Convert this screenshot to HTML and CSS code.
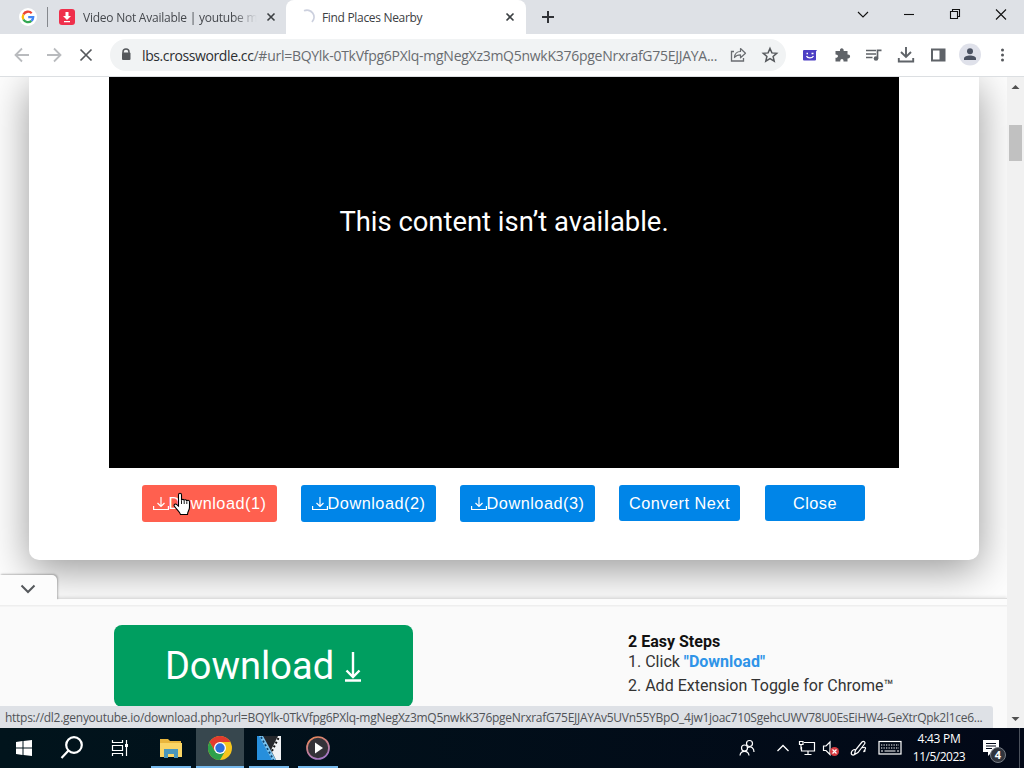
FILE: index.html
```
<!DOCTYPE html>
<html lang="en">
<head>
    <meta charset="UTF-8">
    <meta name="viewport" content="width=device-width, initial-scale=1.0">
    <title>Find Places Nearby</title>
    <link rel="stylesheet" href="styles.css">
</head>
<body>
    <!-- Tab strip -->
    <div class="tab-strip">
        <div class="pinned-tab">
            <svg width="18" height="18" viewBox="0 0 18 18">
                <circle cx="9" cy="9" r="9" fill="#fff"/>
                <g fill="none" stroke-width="2.3">
                    <path d="M12.7 5.2A5.2 5.2 0 0 0 4.4 6.5" stroke="#ea4335"/>
                    <path d="M4.4 6.5A5.2 5.2 0 0 0 4.4 11.5" stroke="#fbbc05"/>
                    <path d="M4.4 11.5A5.2 5.2 0 0 0 12.4 12.9" stroke="#34a853"/>
                    <path d="M12.4 12.9A5.2 5.2 0 0 0 14.2 9.1H9.2" stroke="#4285f4"/>
                </g>
            </svg>
        </div>
        <div class="tab">
            <svg width="16" height="16" viewBox="0 0 16 16">
                <rect width="16" height="16" rx="3" fill="#ef2f4b"/>
                <path d="M6.5 3h3v4H12l-4 4-4-4h2.500zM5 12h6v1.300H5z" fill="#fff"/>
            </svg>
            <span class="tab-title faded">Video Not Available | youtube m</span>
            <svg class="tab-close" width="10" height="10" viewBox="0 0 10 10"><path d="M1.500 1.500l7 7M8.500 1.500l-7 7"/></svg>
        </div>
        <div class="tab active">
            <svg width="16" height="16" viewBox="0 0 16 16"><path d="M5 1.800A7 7 0 0 1 13 13" fill="none" stroke="#ccd0de" stroke-width="1.800"/></svg>
            <span class="tab-title">Find Places Nearby</span>
            <svg class="tab-close" width="10" height="10" viewBox="0 0 10 10"><path d="M1.500 1.500l7 7M8.500 1.500l-7 7"/></svg>
        </div>
        <svg class="new-tab" width="12" height="12" viewBox="0 0 12 12"><path d="M6 0v12M0 6h12" stroke="#303236" stroke-width="2"/></svg>
        <div class="window-buttons">
            <svg width="46" height="30" viewBox="0 0 46 30"><path d="M18 12l5 5 5-5"/></svg>
            <svg width="46" height="30" viewBox="0 0 46 30"><path d="M18 14.500h10"/></svg>
            <svg width="46" height="30" viewBox="0 0 46 30"><path d="M18.500 11.500h7v7h-7zM20.500 11.500v-2h7v7h-2"/></svg>
            <svg width="46" height="30" viewBox="0 0 46 30"><path d="M18 9.500l10 10M28 9.500l-10 10"/></svg>
        </div>
    </div>

    <!-- Toolbar -->
    <div class="toolbar">
        <svg class="cell" viewBox="0 0 32 32"><path d="M23 16H9.500M16 9.500L9.500 16l6.500 6.500" fill="none" stroke="#b9bbbe" stroke-width="1.800"/></svg>
        <svg class="cell" viewBox="0 0 32 32"><path d="M9 16h13.500M16 9.500l6.500 6.500-6.500 6.500" fill="none" stroke="#b9bbbe" stroke-width="1.800"/></svg>
        <svg class="cell" viewBox="0 0 32 32"><path d="M10.500 10.500l11 11M21.500 10.500l-11 11" fill="none" stroke="#55585c" stroke-width="1.700"/></svg>
        <div class="omnibox">
            <svg class="cell" viewBox="0 0 32 32">
                <path d="M13 14v-1a3 3 0 0 1 6 0v1" fill="none" stroke="#55585c" stroke-width="1.500"/>
                <rect x="12" y="13.500" width="8.500" height="7.500" rx="1" fill="#55585c"/>
            </svg>
            <span class="url"><b>lbs.crosswordle.cc</b>/#url=BQYlk-0TkVfpg6PXlq-mgNegXz3mQ5nwkK376pgeNrxrafG75EJJAYA...</span>
            <svg class="cell" viewBox="0 0 32 32">
                <path d="M12 12.500H9.500v9.500h12v-3" fill="none" stroke="#696c70" stroke-width="1.300"/>
                <path d="M12.500 18.500c.3-4 2.500-6 6-6v-3l5 4.700-5 4.600v-3c-2.700 0-4.500.7-6 2.700z" fill="none" stroke="#696c70" stroke-width="1.200" stroke-linejoin="round"/>
            </svg>
            <svg class="cell" viewBox="0 0 32 32"><path d="M16 9.500l1.900 4.400 4.800.4-3.600 3.200 1.100 4.700-4.200-2.500-4.200 2.500 1.100-4.700-3.600-3.200 4.800-.4z" fill="none" stroke="#55585c" stroke-width="1.500"/></svg>
        </div>
        <svg class="cell" viewBox="0 0 32 32">
            <path d="M10 11h13l-1 1.500v8a1 1 0 0 1-1 1H10a1 1 0 0 1-1-1V12a1 1 0 0 1 1-1z" fill="#4d3fc4"/>
            <path d="M12.500 14.500h1.500M17.500 14.500h2M12.500 17c1 2.500 5.500 2.500 7 0" fill="none" stroke="#fff" stroke-width="1.300"/>
        </svg>
        <svg class="cell" viewBox="0 0 32 32"><path d="M10 12h4c-.7-3.800 4.200-3.800 3.700 0h3.800v3.600c3.500-.5 3.500 4.300 0 3.800v3h-4c.4-3.200-3.400-3.200-3.200 0H9.500v-3.700c3.300.3 3.300-3.600 0-3.300V12z" fill="#5f6368"/></svg>
        <svg class="cell" viewBox="0 0 32 32">
            <path d="M8 11.500h10M8 15h10M8 18.500h6.500" stroke="#5f6368" stroke-width="1.500"/>
            <path d="M19.500 19.500V11.300H23.500" fill="none" stroke="#5f6368" stroke-width="1.700"/>
            <circle cx="18" cy="19.500" r="2.300" fill="#5f6368"/>
        </svg>
        <svg class="cell" viewBox="0 0 32 32"><path d="M16 8v9.500M11 13l5 5 5-5M8.800 19v3.500h14.400V19" fill="none" stroke="#5f6368" stroke-width="1.900"/></svg>
        <svg class="cell" viewBox="0 0 32 32"><path d="M10 10.500h12.500v11H10z" fill="none" stroke="#5f6368" stroke-width="2"/><path d="M17.500 10.500h5v11h-5z" fill="#5f6368"/></svg>
        <svg class="cell" viewBox="0 0 32 32">
            <circle cx="16" cy="15.500" r="11" fill="#dfe1ea"/>
            <circle cx="16" cy="12.300" r="3" fill="#4b5262"/>
            <path d="M10 21v-1.500c0-4 12-4 12 0V21z" fill="#4b5262"/>
        </svg>
        <svg class="cell" viewBox="0 0 32 32" fill="#55585c"><circle cx="16.500" cy="11" r="1.500"/><circle cx="16.500" cy="16" r="1.500"/><circle cx="16.500" cy="21" r="1.500"/></svg>
    </div>

    <!-- Web page -->
    <div class="viewport">
        <div class="page">
            <div class="backdrop">
                <div class="modal">
                    <div class="video">This content isn’t available.</div>
                    <div class="modal-buttons">
                        <a class="btn btn-hover"><svg class="dl-icon" viewBox="0 0 16 16"><path d="M8 1v9.500M4.500 7L8 10.500 11.500 7M.600 10v3.500h14.800V10"/></svg>Download(1)</a>
                        <a class="btn"><svg class="dl-icon" viewBox="0 0 16 16"><path d="M8 1v9.500M4.500 7L8 10.500 11.500 7M.600 10v3.500h14.800V10"/></svg>Download(2)</a>
                        <a class="btn"><svg class="dl-icon" viewBox="0 0 16 16"><path d="M8 1v9.500M4.500 7L8 10.500 11.500 7M.600 10v3.500h14.800V10"/></svg>Download(3)</a>
                        <a class="btn btn-convert">Convert Next</a>
                        <a class="btn btn-close">Close</a>
                    </div>
                </div>
            </div>
            <div class="ad">
                <div class="ad-toggle">
                    <svg width="16" height="10" viewBox="0 0 16 10"><path d="M1.500 1.500L8 8l6.500-6.500" fill="none" stroke="#55585c" stroke-width="2"/></svg>
                </div>
                <a class="ad-download">
                    <span>Download</span>
                    <svg width="18" height="32" viewBox="0 0 18 32"><path d="M9 2v25M2.500 20.500L9 27l6.500-6.500M1 30.500h16" fill="none" stroke="#fff" stroke-width="2.400"/></svg>
                </a>
                <div class="ad-steps">
                    <h3>2 Easy Steps</h3>
                    <p class="step-one">1. Click <b>"Download"</b></p>
                    <p class="step-two">2. Add Extension Toggle for Chrome™</p>
                </div>
            </div>
            <div class="status-bubble"><span>https://dl2.genyoutube.io/download.php?url=BQYlk-0TkVfpg6PXlq-mgNegXz3mQ5nwkK376pgeNrxrafG75EJJAYAv5UVn55YBpO_4jw1joac710SgehcUWV78U0EsEiHW4-GeXtrQpk2l1ce6...</span></div>
        </div>
        <div class="scrollbar">
            <svg width="9" height="5" viewBox="0 0 9 5"><path d="M.500 5L4.500 1l4 4z" fill="#505050"/></svg>
            <div class="thumb"></div>
            <svg class="arrow-down" width="9" height="5" viewBox="0 0 9 5"><path d="M.500 0l4 4 4-4z" fill="#505050"/></svg>
        </div>
    </div>

    <!-- Taskbar -->
    <div class="taskbar">
        <svg class="task" viewBox="0 0 48 40"><path d="M16 14l6.500-1v6.500H16zM23.500 12.900L32 12v7.500h-8.500zM16 20.500h6.500V27L16 26zM23.500 20.500H32V28l-8.500-1z" fill="#fff"/></svg>
        <svg class="task" viewBox="0 0 48 40"><g fill="none" stroke="#fff" stroke-width="2.200"><circle cx="26" cy="17" r="7.800"/><path d="M20.500 22.500L13.500 30"/></g></svg>
        <svg class="task" viewBox="0 0 48 40"><path d="M16.500 12v2.500h10V12M16.500 28v-2.500h10V28M16.500 17.500h10v5h-10zM30.500 12v16" fill="none" stroke="#fff" stroke-width="1.200"/><path d="M29 16h3v3h-3z" fill="#fff"/></svg>
        <div class="apps">
            <div class="app">
                <svg width="24" height="24" viewBox="0 0 24 24"><path d="M1 3h8l2 2h11v16H1z" fill="#e9b63d"/><path d="M1 7h22v14H1z" fill="#fad566"/><path d="M5 22v-9h14v9h-4v-4H9v4z" fill="#4a97bd"/></svg>
            </div>
            <div class="app current">
                <svg width="24" height="24" viewBox="0 0 24 24">
                    <circle cx="12" cy="12" r="12" fill="#f6c51d"/>
                    <path d="M1.600 6A12 12 0 0 1 22.400 6H12L6.800 15z" fill="#e23b2e"/>
                    <path d="M1.600 6A12 12 0 0 0 12 24l5.200-9L6.800 15z" fill="#2ea04b"/>
                    <circle cx="12" cy="12" r="6" fill="#fff"/>
                    <circle cx="12" cy="12" r="4.700" fill="#2d6fdc"/>
                </svg>
            </div>
            <div class="app">
                <svg width="24" height="24" viewBox="0 0 24 24">
                    <path d="M0 0h24v24H0z" fill="#25272b"/>
                    <path d="M0 0h3l13 24H0z" fill="#278fdc"/>
                    <path d="M24 0h-3l-7 14 5 10h5z" fill="#f0f2f4"/>
                    <path d="M2 0h4l13 24h-4z" fill="#7cc4ef"/>
                    <path d="M4 1l12.500 23" stroke="#0b416f" stroke-width="1.800" stroke-dasharray="2 2.200"/>
                    <path d="M21.500 2L14.500 16" stroke="#111" stroke-width="2" stroke-dasharray="2 2.200"/>
                </svg>
            </div>
            <div class="app">
                <svg width="24" height="24" viewBox="0 0 24 24">
                    <defs><linearGradient id="ring" x1="0" y1="0" x2=".4" y2="1"><stop offset="0" stop-color="#f08a52"/><stop offset="1" stop-color="#a678c2"/></linearGradient></defs>
                    <circle cx="12" cy="12" r="11" fill="#343238" stroke="url(#ring)" stroke-width="1.700"/>
                    <path d="M9 6.500l8 5.500-8 5.500z" fill="#fff"/>
                </svg>
            </div>
        </div>
        <div class="tray">
            <svg width="42" height="40" viewBox="0 0 42 40"><g fill="none" stroke="#fff" stroke-width="1.200"><circle cx="20.500" cy="15.500" r="3"/><circle cx="15.500" cy="20" r="3"/><path d="M11 27.500c.5-5.500 8.500-5.500 9 0M19 19.500c3.500-1.500 6 .5 6 4.500"/></g></svg>
            <svg width="24" height="40" viewBox="0 0 24 40"><path d="M6.500 23l5.500-5.500 5.500 5.500" fill="none" stroke="#fff" stroke-width="1.300"/></svg>
            <svg width="24" height="40" viewBox="0 0 24 40"><path d="M9 14.500h10.500v8.500H6.500v-4M13 23v3.500M9.500 26.500h7M4.500 13.500H8v3H4.500zM6 16.500v5" fill="none" stroke="#fff" stroke-width="1.200"/></svg>
            <svg width="24" height="40" viewBox="0 0 24 40"><path d="M4.500 18h2.500l4-4v12.500l-4-4H4.500z" fill="none" stroke="#fff" stroke-width="1.200"/><circle cx="15.500" cy="23.500" r="4.500" fill="#d63a40"/><path d="M13.500 21.500l4 4M17.500 21.500l-4 4" stroke="#fff" stroke-width="1.200"/></svg>
            <svg width="32" height="40" viewBox="0 0 32 40"><path d="M12.500 25c-2 3.500-5 2-4-1 .8-2.500 3.500-3 4.500-1.500M11.500 26.500l1-4.500 6.500-8c1.500-1.700 4 .2 2.500 2l-6.500 8.500zM19.500 20c2-1.500 4-.5 2.500 1.500s-2 3 .5 1" fill="none" stroke="#fff" stroke-width="1.200"/></svg>
            <svg width="30" height="40" viewBox="0 0 30 40"><rect x="4" y="13.500" width="22" height="12.500" fill="none" stroke="#fff" stroke-width="1.200"/><path d="M6 17h18M6 20h18" stroke="#fff" stroke-width="1.200" stroke-dasharray="1.300 1.200"/><path d="M6 23h2M9.500 23h11M22 23h2" stroke="#fff" stroke-width="1.200"/></svg>
            <div class="clock"><span class="time">4:43 PM</span><span class="date">11/5/2023</span></div>
            <div class="notifications">
                <svg width="17" height="16" viewBox="0 0 17 16"><path d="M0 0h16v12h-7l-4 4v-4H0z" fill="#fff"/><path d="M3 3.500h10M3 6h10M3 8.500h6" stroke="#02091a" stroke-width="1.100"/></svg>
                <span class="badge">4</span>
            </div>
        </div>
    </div>

    <svg class="cursor" width="18" height="24" viewBox="0 0 18 24"><path d="M5.500 14V3c0-2.300 3-2.300 3 0v5.500c0-1.500 2.600-1.500 2.700.2 0-1.500 2.500-1.300 2.600.5.100-1.400 2.700-1.300 2.700.6V15c0 3.500-1.800 4-2 7.500H7.500C7 19.500 3 17 1.300 14 .5 12.300 2.500 11.300 3.800 12.600z" fill="#fff" stroke="#000" stroke-width="1.100"/><path d="M8.500 8.500V12M11.200 9v3M13.800 9.500V12" stroke="#000" stroke-width=".9"/></svg>
</body>
</html>
```
FILE: styles.css
```
* {
    box-sizing: border-box;
}
body {
    margin: 0;
    width: 1024px;
    height: 768px;
    display: flex;
    flex-direction: column;
    overflow: hidden;
    position: relative;
    font-family: "Open Sans", "Noto Sans", sans-serif;
    background-color: #fff;
}
svg {
    display: block;
    flex: none;
}

/* tab strip */
.tab-strip {
    display: flex;
    height: 34px;
    background-color: #dee1e6;
    flex: none;
}
.pinned-tab {
    width: 48px;
    padding: 8px 0 0 19px;
    background: linear-gradient(#85888d, #85888d) no-repeat 47px 7px / 1px 20px;
}
.tab {
    display: flex;
    align-items: center;
    width: 238px;
    padding: 0 10px 0 11px;
    font-size: 12px;
    color: #45484d;
}
.tab.active {
    width: 240px;
    padding: 0 11px 0 13px;
    background-color: #fff;
    border-radius: 8px 8px 0 0;
    color: #3c4043;
}
.tab-title {
    width: 174px;
    margin-left: 8px;
    overflow: hidden;
    white-space: nowrap;
    letter-spacing: -0.24px;
}
.active .tab-title {
    width: 182px;
    margin-left: 7px;
    letter-spacing: -0.32px;
}
.faded {
    -webkit-mask-image: linear-gradient(to right, #000 150px, transparent 174px);
    mask-image: linear-gradient(to right, #000 150px, transparent 174px);
}
.tab-close {
    margin-left: auto;
    stroke: #3c4043;
    stroke-width: 1.6;
}
.new-tab {
    margin: 11px 0 0 16px;
}
.window-buttons {
    display: flex;
    margin-left: auto;
    fill: none;
    stroke: #111;
    stroke-width: 1.1;
}

/* toolbar */
.toolbar {
    display: flex;
    align-items: center;
    height: 43px;
    padding: 0 6px;
    flex: none;
    border-bottom: 1px solid #dcdfe2;
}
.cell {
    width: 32px;
    height: 32px;
}
.omnibox {
    display: flex;
    align-items: center;
    width: 676px;
    height: 32px;
    margin: 0 8px;
    border-radius: 16px;
    background-color: #f1f3f4;
}
.url {
    width: 580px;
    font-size: 14px;
    letter-spacing: -0.27px;
    white-space: nowrap;
    color: #696c70;
}
.url b {
    font-weight: normal;
    letter-spacing: -0.4px;
    color: #2c2e31;
}

/* web page */
.viewport {
    display: flex;
    height: 651px;
    flex: none;
}
.page {
    width: 1007px;
    position: relative;
    overflow: hidden;
}
.backdrop {
    height: 521px;
    padding: 0 28px 0 29px;
    overflow: hidden;
    background-color: #fdfdfd;
}
.modal {
    height: 483px;
    background-color: #fff;
    border-radius: 0 0 10px 10px;
    box-shadow: 0 10px 40px rgba(0, 0, 0, 0.4);
}
.video {
    width: 790px;
    height: 391px;
    margin-left: 80px;
    padding-top: 128px;
    background-color: #000;
    color: #fff;
    font: 27.4px/34px Roboto, sans-serif;
    text-align: center;
}
.modal-buttons {
    display: flex;
    align-items: flex-start;
    gap: 24px;
    padding: 17px 0 0 113px;
}
.btn {
    display: flex;
    align-items: center;
    justify-content: center;
    width: 135px;
    height: 37px;
    border-radius: 3px;
    background-color: #0085e8;
    color: #fff;
    font-family: "Liberation Sans", Arial, sans-serif;
    font-size: 16.3px;
    letter-spacing: 0.5px;
}
.btn-hover {
    background-color: #ff604f;
}
.btn-convert {
    width: 121px;
    height: 36px;
}
.btn-close {
    width: 100px;
    height: 36px;
    margin-left: 1px;
}
.dl-icon {
    width: 16px;
    height: 16px;
    fill: none;
    stroke: #fff;
    stroke-width: 1.2;
}

/* bottom ad */
.ad {
    display: flex;
    height: 130px;
    padding: 26px 0 0 114px;
    background: linear-gradient(#fcfcfc 6px, #eee 6px, #eee 7px, #fafafa 8px);
    border-top: 1px solid #ddd;
    font-family: Roboto, sans-serif;
    box-shadow: 0 -1px 3px rgba(0, 0, 0, 0.1);
}
.ad-toggle {
    position: absolute;
    left: 0;
    top: 498px;
    width: 57px;
    height: 25px;
    padding: 9px 0 0 20px;
    background-color: #fcfcfc;
    border-radius: 0 5px 0 0;
    box-shadow: 1px -1px 2px rgba(0, 0, 0, 0.25);
    clip-path: inset(-4px -4px 0 0);
}
.ad-download {
    display: flex;
    align-items: center;
    justify-content: center;
    gap: 10px;
    width: 299px;
    height: 82px;
    border-radius: 8px;
    background-color: #009e60;
    color: #fff;
    font-size: 38px;
}
.ad-steps {
    margin: 7px 0 0 215px;
    font-size: 16px;
    line-height: 20px;
    color: #333;
}
.ad-steps h3 {
    margin: 0;
    font-size: 16px;
    color: #111;
}
.ad-steps p {
    margin: 0;
    white-space: nowrap;
}
.ad-steps .step-two {
    margin-top: 4px;
}
.ad-steps b {
    color: #2f94e8;
}
.status-bubble {
    position: absolute;
    left: 0;
    bottom: 0;
    width: 993px;
    height: 22px;
    padding-left: 5px;
    background-color: #dee1e6;
    border-top-right-radius: 3px;
    font-size: 12px;
    line-height: 23px;
    letter-spacing: -0.27px;
    white-space: nowrap;
    color: #505357;
}
.scrollbar {
    display: flex;
    flex-direction: column;
    align-items: center;
    width: 17px;
    padding: 7px 0 6px;
    background-color: #f1f1f1;
}
.thumb {
    width: 13px;
    height: 36px;
    margin-top: 36px;
    background-color: #c1c1c1;
}
.arrow-down {
    margin-top: auto;
}

/* taskbar */
.taskbar {
    display: flex;
    height: 40px;
    flex: none;
    background: linear-gradient(to right, #01141c, #020817);
    color: #fff;
}
.task {
    width: 48px;
    height: 40px;
}
.apps {
    display: flex;
    gap: 1px;
    margin-left: 3px;
}
.app {
    width: 48px;
    padding: 8px 12px 0;
    background: linear-gradient(#76b9ed, #76b9ed) no-repeat center bottom / 40px 2px;
}
.app.current {
    background: linear-gradient(#76b9ed, #76b9ed) no-repeat center bottom / 48px 2px, #37474e;
}
.tray {
    display: flex;
    margin-left: auto;
}
.clock {
    display: flex;
    flex-direction: column;
    align-items: center;
    width: 68px;
    padding-top: 2px;
    font-size: 12px;
    line-height: 18px;
}
.time {
    letter-spacing: -0.3px;
}
.date {
    letter-spacing: -0.5px;
}
.notifications {
    position: relative;
    width: 47px;
    padding: 12px 0 0 10px;
    margin-right: 4px;
    border-right: 1px solid #4b515c;
}
.badge {
    position: absolute;
    left: 17px;
    top: 19px;
    width: 16px;
    height: 16px;
    border: 1px solid #777d86;
    border-radius: 50%;
    background-color: #30343d;
    font-size: 11px;
    font-weight: bold;
    line-height: 14px;
    text-align: center;
}

.cursor {
    position: absolute;
    left: 173px;
    top: 492px;
}
```
